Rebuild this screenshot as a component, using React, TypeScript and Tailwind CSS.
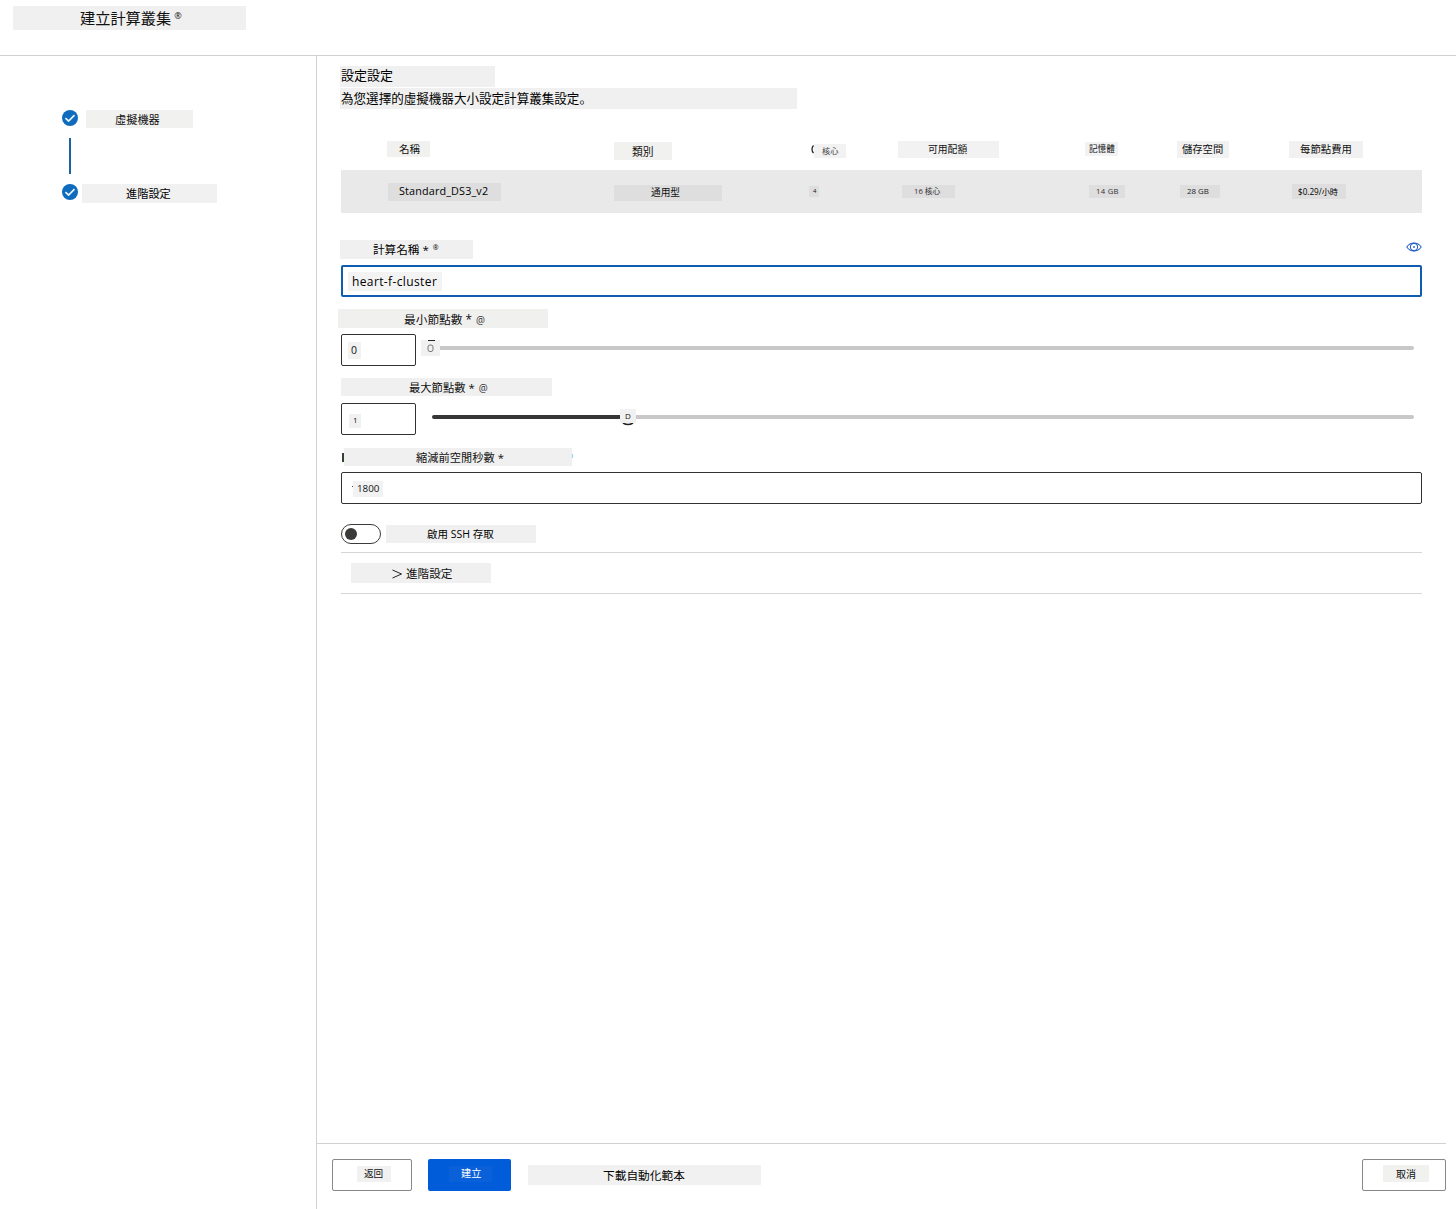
import type { ReactNode } from "react";

function Chip({ className = "", children }: { className?: string; children?: ReactNode }) {
  return (
    <div className={`flex shrink-0 items-center whitespace-nowrap leading-none ${className}`}>
      {children}
    </div>
  );
}

function CheckCircle() {
  return (
    <svg width="16" height="16" viewBox="0 0 16 16" className="shrink-0">
      <circle cx="8" cy="8" r="8" fill="#0f6cbd" />
      <path d="M3.4 8.2 6.6 11 12.5 5.2" fill="none" stroke="#e6f3ff" strokeWidth="1.7" />
    </svg>
  );
}

function Eye() {
  return (
    <svg width="16" height="12" viewBox="0 0 16 12" fill="none" stroke="#2b63c6" strokeWidth="1.1">
      <path d="M0.8 6C2.6 3.3 5 2 8 2s5.400 1.300 7.200 4C13.400 8.700 11 10 8 10S2.600 8.700 0.800 6Z" />
      <circle cx="8" cy="6" r="3.6" />
      <circle cx="8" cy="6" r="0.700" fill="#2b63c6" strokeWidth="0.6" />
    </svg>
  );
}

const columns =
  "grid grid-cols-[227px_195px_89px_187px_92px_112px_133px] items-start pl-[46px]";

function Sidebar() {
  return (
    <aside className="w-[317px] shrink-0 border-r border-[#d2d2d2] pt-[54px]">
      <div className="flex h-[18px] items-start pl-[62px]">
        <CheckCircle />
        <Chip className="ml-2 h-[18px] w-[107px] bg-[#f1f1f0] pt-px pl-[29px] text-[11.2px]">虛擬機器</Chip>
      </div>
      <div className="mt-[10px] ml-[69px] h-9 w-0.5 bg-[#1a659f]" />
      <div className="mt-[10px] flex items-start pl-[62px]">
        <CheckCircle />
        <Chip className="ml-1 h-[19px] w-[135px] bg-[#f1f1f1] pt-px pl-[44px] text-[11.2px] text-black">進階設定</Chip>
      </div>
    </aside>
  );
}

function SizeTable() {
  return (
    <div className="mt-8">
      <div className={`${columns} h-[29px]`}>
        <Chip className="h-4 w-[43px] bg-[#f1f1f0] pl-3 text-[10.5px]">名稱</Chip>
        <Chip className="mt-px h-[18px] w-[58px] bg-[#f1f1f0] pt-[3px] pl-[18px] text-[10.800px]">類別</Chip>
        <div className="flex items-start">
          <svg width="5" height="14" viewBox="0 0 5 14" className="mt-[2px]">
            <path d="M4.500 2.500C2.500 4.500 2.500 8 4.500 10" fill="none" stroke="#222" strokeWidth="1.300" />
          </svg>
          <Chip className="mt-[3px] h-[14px] w-8 bg-[#f1f2f1] pl-2 text-[8.200px] text-[#444]">核心</Chip>
        </div>
        <Chip className="h-[17px] w-[101px] bg-[#f1f2f1] pl-[30px] text-[9.800px]">可用配額</Chip>
        <Chip className="mt-px h-[14px] w-[33px] bg-[#f1f2f1] pt-px pl-1 text-[8.600px]">記憶體</Chip>
        <Chip className="h-[17px] w-[52px] bg-[#f1f2f1] pl-[5px] text-[10.300px]">儲存空間</Chip>
        <Chip className="h-[17px] w-[74px] bg-[#f1f1f1] pl-[11px] text-[10.400px]">每節點費用</Chip>
      </div>
      <div className={`${columns} h-[43px] bg-[#e9e9e9]`}>
        <Chip className="mt-[13px] ml-px h-[18px] w-[113px] bg-[#dedede] pb-px pl-[11px] text-[10.800px] font-medium tracking-[0.150px] text-black">Standard_DS3_v2</Chip>
        <Chip className="mt-[15px] h-4 w-[108px] bg-[#dedede] pl-[37px] text-[9.700px]">通用型</Chip>
        <Chip className="mt-4 h-[11px] w-[10px] bg-[#dedede] pb-0.5 pl-1 text-[6px]">4</Chip>
        <Chip className="mt-[15px] ml-1 h-[13px] w-[53px] bg-[#dedede] pl-3 text-[7.700px] text-[#333]">16 核心</Chip>
        <Chip className="mt-[15px] ml-1 h-[13px] w-9 bg-[#dedede] pl-[7px] text-[7.700px] tracking-[0.300px] text-[#333]">14 GB</Chip>
        <Chip className="mt-[15px] ml-[3px] h-[13px] w-10 bg-[#dedede] pl-[7px] text-[7.900px] text-[#222]">28 GB</Chip>
        <Chip className="mt-[14px] ml-[3px] h-[15px] w-[54px] bg-[#dedede] pt-px pl-[6px] text-[8.150px] text-black">$0.29/小時</Chip>
      </div>
    </div>
  );
}

function ComputeForm() {
  return (
    <div>
      <div className="mt-[27px] flex h-[25px] items-start justify-between">
        <Chip className="-ml-px h-[19px] w-[133px] bg-[#f0f0f0] pt-px pl-[33px] text-[11.600px] text-black">
          計算名稱 *<span className="mb-1.5 ml-1 text-[7px]">®</span>
        </Chip>
        <div className="mt-px"><Eye /></div>
      </div>
      <div className="flex h-8 items-center rounded-[2px] border-2 border-[#0f5cb0] pl-[5px]">
        <Chip className="h-[19px] w-[94px] bg-[#f3f3f3] pt-px pl-1 text-[12px] font-medium tracking-[0.380px] text-black">heart-f-cluster</Chip>
      </div>

      <Chip className="mt-3 -ml-[3px] h-[19px] w-[210px] bg-[#f0f0ef] pt-[2px] pl-[66px] text-[11.700px]">
        最小節點數 *<span className="ml-1 text-[10px] text-[#333]">@</span>
      </Chip>
      <div className="mt-[6px] flex h-8 items-start">
        <div className="h-8 w-[75px] rounded-[2px] border border-[#323130] pt-[7px] pl-[6px]">
          <Chip className="h-[17px] w-[13px] bg-[#f2f2f2] pl-[3px] text-[10.500px]">0</Chip>
        </div>
        <div className="mt-[6px] ml-[5px] flex h-4 w-[993px] items-center">
          <div className="h-4 w-[19px] shrink-0 bg-[#f1f1f1]">
            <svg width="19" height="16" viewBox="0 0 19 16" fill="none">
              <path d="M7 0.500H14" stroke="#222" />
              <rect x="7" y="5" width="5" height="6.500" rx="2" stroke="#777" />
            </svg>
          </div>
          <div className="h-1 flex-1 rounded-r-full bg-[#c8c8c8]" />
        </div>
      </div>

      <Chip className="mt-3 h-[18px] w-[211px] bg-[#f0f0f0] pt-px pl-[68px] text-[11.300px]">
        最大節點數 *<span className="ml-1 text-[10px] text-[#333]">@</span>
      </Chip>
      <div className="mt-[7px] flex h-8 items-start">
        <div className="h-8 w-[75px] rounded-[2px] border border-[#323130] pt-[10px] pl-[7px]">
          <Chip className="h-[14px] w-3 bg-[#f1f1f1] pb-[2px] pl-1 text-[8px]">1</Chip>
        </div>
        <div className="mt-[4px] ml-4 flex h-5 w-[982px] items-center">
          <div className="h-1 w-[188px] rounded-l-full bg-[#363636]" />
          <div className="flex h-5 w-4 shrink-0 flex-col items-center">
            <div className="mt-[2px]"><Chip className="h-[14px] w-4 justify-center bg-[#f1f1f1] pb-px text-[8px]">D</Chip></div>
            <svg width="12" height="3" viewBox="0 0 12 3" className="shrink-0">
              <path d="M1 0Q6 3 11 0" fill="none" stroke="#222" strokeWidth="1.600" />
            </svg>
          </div>
          <div className="h-1 flex-1 rounded-r-full bg-[#c8c8c8]" />
        </div>
      </div>

      <div className="mt-[13px] flex items-center pl-px">
        <div className="h-[9px] w-0.5 bg-[#33432f]" />
        <Chip className="h-[18px] w-[228px] bg-[#f0f0f0] pt-px pl-[72px] text-[11.250px]">縮減前空閒秒數 *</Chip>
        <div className="mb-[3px] h-1 w-px bg-[#8fd4f0]" />
      </div>
      <div className="mt-[6px] flex h-8 items-center rounded-[2px] border border-[#323130] pl-[9px]">
        <span className="mb-1 ml-px h-px w-px bg-[#444]" />
        <Chip className="mt-px h-4 w-[30px] bg-[#f1f2f1] pl-1 text-[9.800px]">1800</Chip>
      </div>

      <div className="flex h-[49px] items-start border-b border-[#d6d6d6] pt-5">
        <div className="flex h-5 w-10 items-center rounded-full border border-[#3b3a39] pl-[3px]">
          <div className="size-3 rounded-full bg-[#3b3a39]" />
        </div>
        <Chip className="mt-px ml-[5px] h-[18px] w-[150px] bg-[#f0f0f0] pl-[41px] text-[10.500px] text-black">啟用 SSH 存取</Chip>
      </div>
      <div className="h-[41px] border-b border-[#d6d6d6] pt-[10px] pl-[10px]">
        <Chip className="h-5 w-[140px] bg-[#f0f0f0] pt-px pl-[41px] text-[11.600px]">
          <svg width="11" height="10" viewBox="0 0 11 10" className="mr-[3px]">
            <path d="M0.500 1 9.500 5 0.500 9" fill="none" stroke="#222" />
          </svg>
          進階設定
        </Chip>
      </div>
    </div>
  );
}

function Footer() {
  return (
    <footer className="mr-[10px] flex h-[66px] items-start border-t border-[#d2d2d2] pt-[15px] pl-[15px]">
      <button className="flex h-8 w-20 items-start rounded-[2px] border border-[#8a8886] pt-[6px] pl-6">
        <Chip className="h-4 w-[34px] bg-[#f1f1f1] pl-[7px] text-[9.600px]">返回</Chip>
      </button>
      <button className="ml-4 flex h-8 w-[83px] items-start rounded-[2px] bg-[#015cda] pt-[7px] pl-[21px] text-white">
        <Chip className="h-4 w-[43px] bg-[#0a60d8] pb-px pl-3 text-[10.200px]">建立</Chip>
      </button>
      <Chip className="mt-[6px] ml-[17px] h-5 w-[233px] bg-[#f1f1f1] pt-px pl-[75px] text-[11.700px] text-black">下載自動化範本</Chip>
      <button className="ml-auto flex h-8 w-[84px] items-start rounded-[2px] border border-[#8a8886] pt-[5px] pl-5">
        <Chip className="h-[17px] w-[46px] bg-[#f1f1f0] pl-[13px] text-[10px]">取消</Chip>
      </button>
    </footer>
  );
}

export default function App() {
  return (
    <div className="flex h-[1209px] w-[1456px] flex-col overflow-hidden bg-white font-['Open_Sans','Noto_Sans_CJK_JP',sans-serif] text-[#111]">
      <header className="h-14 shrink-0 border-b border-[#d2d2d2] pt-[6px] pl-[13px]">
        <Chip className="h-6 w-[233px] bg-[#f0f0f0] pt-0.5 pl-[67px] text-[15.200px]">
          建立計算叢集<span className="mb-2 ml-[3px] text-[9px]">®</span>
        </Chip>
      </header>
      <div className="flex min-h-0 flex-1">
        <Sidebar />
        <div className="flex flex-1 flex-col">
          <main className="flex-1 pt-[10px] pr-[34px] pl-6">
            <Chip className="-ml-px h-[21px] w-[155px] bg-[#f0f0f0] pb-0.5 pl-px text-[13px] text-black">設定設定</Chip>
            <Chip className="mt-px -ml-px h-[21px] w-[457px] bg-[#f0f0f0] pt-0.5 pl-px text-[12.550px] text-black">
              為您選擇的虛擬機器大小設定計算叢集設定。
            </Chip>
            <SizeTable />
            <ComputeForm />
          </main>
          <Footer />
        </div>
      </div>
    </div>
  );
}
